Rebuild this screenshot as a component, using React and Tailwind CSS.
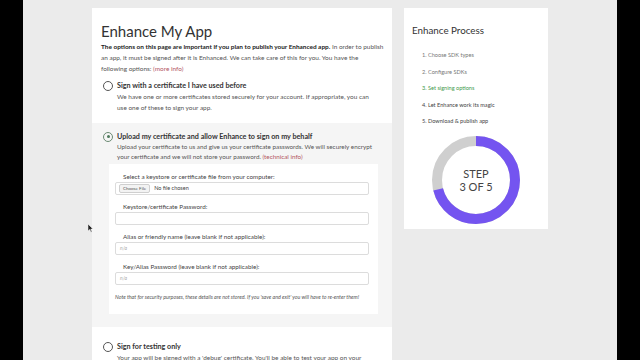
import React from "react";

const font = { fontFamily: "Lato, 'Open Sans', sans-serif" };

const stripColors = [
  "bg-[#dfe3ea]", "bg-[#e8b7c0]", "bg-[#f3f1c8]", "bg-[#fbfbe4]", "bg-[#d9c4e6]",
  "bg-[#f6f0c0]", "bg-[#f1d4d8]", "bg-[#d5e6ef]", "bg-[#c99aa8]", "bg-[#e9efc8]",
  "bg-[#f7f5dc]", "bg-[#e3b9c6]",
];

const Radio = ({ checked }) => (
  <span
    className={
      "mt-[0.5px] flex h-[10px] w-[10px] shrink-0 items-center justify-center rounded-full border " +
      (checked ? "border-[#6b8a73]" : "border-[#555]")
    }
  >
    {checked && <span className="h-[3px] w-[3px] rounded-full bg-[#4f7a5c]" />}
  </span>
);

const Field = ({ label, placeholder }) => (
  <div className="mt-[7px]">
    <div className="pl-[8px] text-[6.3px] leading-[10px] text-[#444]">{label}</div>
    <div className="flex h-[13px] items-center rounded-[2px] border border-[#dcdcdc] bg-white px-[4px] text-[5px] italic text-[#aaa]">
      {placeholder}
    </div>
  </div>
);

const steps = [
  { t: "1. Choose SDK types" },
  { t: "2. Configure SDKs" },
  { t: "3. Set signing options", active: true },
  { t: "4. Let Enhance work its magic", dark: true },
  { t: "5. Download & publish app", dark: true },
];

const Donut = () => {
  const r = 39;
  const c = 2 * Math.PI * r;
  const done = 0.71;
  return (
    <svg width="90" height="90" viewBox="0 0 90 90">
      <circle cx="45" cy="45" r={r} fill="none" stroke="#cfcfcf" strokeWidth="10" />
      <circle
        cx="45"
        cy="45"
        r={r}
        fill="none"
        stroke="#7454f0"
        strokeWidth="10"
        strokeDasharray={`${c * done} ${c}`}
        transform="rotate(-90 45 45)"
      />
    </svg>
  );
};

export default function App() {
  return (
    <div className="flex h-[360px] w-[640px] overflow-hidden bg-black" style={font}>
      <div className="w-[23px] shrink-0 bg-black" />
      <div className="relative flex flex-1 gap-[12px] bg-[#ebebeb] pl-[69px] pt-[8px]">
        {/* main card */}
        <div className="flex w-[300px] shrink-0 flex-col bg-white">
          <div className="flex h-[1px]">
            {stripColors.map((c, i) => (
              <div key={i} className={"flex-1 " + c} />
            ))}
          </div>
          <div className="pl-[9px] pr-[8px] pt-[13px]">
            <h1 className="text-[15px] leading-[20px] text-[#333]">Enhance My App</h1>
            <p className="text-[6.45px] leading-[11px] text-[#555]">
              <span className="font-bold text-[#222]">
                The options on this page are important if you plan to publish your Enhanced app.
              </span>{" "}
              In order to publish an app, it must be signed after it is Enhanced. We can take care of this for you. You
              have the following options: <span className="text-[#b3555f]">(more info)</span>
            </p>
          </div>

          {/* option 1 */}
          <div className="flex gap-[4px] pb-[10px] pl-[11px] pr-[12px] pt-[6px]">
            <Radio />
            <div>
              <div className="text-[7.2px] font-bold leading-[11px] text-[#333]">
                Sign with a certificate I have used before
              </div>
              <div className="text-[6.45px] leading-[11px] text-[#555]">
                We have one or more certificates stored securely for your account. If appropriate, you can use one of
                these to sign your app.
              </div>
            </div>
          </div>

          {/* option 2 */}
          <div className="bg-[#f5f5f5] pb-[13px] pt-[8px]">
            <div className="flex gap-[4px] pl-[11px] pr-[10px]">
              <Radio checked />
              <div>
                <div className="text-[7.2px] font-bold leading-[11px] text-[#333]">
                  Upload my certificate and allow Enhance to sign on my behalf
                </div>
                <div className="text-[6.3px] leading-[10px] text-[#555]">
                  Upload your certificate to us and give us your certificate passwords. We will securely encrypt your
                  certificate and we will not store your password.{" "}
                  <span className="text-[#b3555f]">(technical info)</span>
                </div>
              </div>
            </div>
            <div className="ml-[17px] mr-[14px] mt-[2px] bg-white pb-[13px] pl-[6px] pr-[9px] pt-[8px]">
              <div className="pl-[8px] text-[6.3px] leading-[10px] text-[#444]">
                Select a keystore or certificate file from your computer:
              </div>
              <div className="flex h-[13px] items-center gap-[4px] rounded-[2px] border border-[#dcdcdc] bg-white px-[3px]">
                <span className="rounded-[2px] border border-[#cfcfcf] bg-[#f3f3f3] px-[3px] text-[4.5px] leading-[7px] text-[#555]">
                  Choose File
                </span>
                <span className="text-[5.5px] text-[#444]">No file chosen</span>
              </div>
              <Field label="Keystore/certificate Password:" placeholder="" />
              <Field label="Alias or friendly name (leave blank if not applicable):" placeholder="n/a" />
              <Field label="Key/Alias Password (leave blank if not applicable):" placeholder="n/a" />
              <div className="mt-[9px] whitespace-nowrap text-[5.3px] italic leading-[7px] text-[#555]">
                Note that for security purposes, these details are not stored. If you 'save and exit' you will have to
                re-enter them!
              </div>
            </div>
          </div>

          {/* option 3 */}
          <div className="flex gap-[4px] pl-[11px] pr-[10px] pt-[14px]">
            <Radio />
            <div>
              <div className="text-[7.2px] font-bold leading-[11px] text-[#333]">Sign for testing only</div>
              <div className="text-[6.45px] leading-[11px] text-[#555]">
                Your app will be signed with a 'debug' certificate. You'll be able to test your app on your devices.
              </div>
            </div>
          </div>
        </div>

        {/* sidebar */}
        <div className="flex h-[221px] w-[144px] shrink-0 flex-col bg-white px-[8px]">
          <div className="pt-[14px] text-[9.8px] leading-[16px] text-[#333]">Enhance Process</div>
          <ul className="mt-[9px] pl-[10px]">
            {steps.map((s) => (
              <li
                key={s.t}
                className={
                  "text-[5.6px] leading-[16.6px] " +
                  (s.active ? "text-[#3f9a4d]" : s.dark ? "text-[#444]" : "text-[#777]")
                }
              >
                {s.t}
              </li>
            ))}
          </ul>
          <div className="relative mx-auto mt-[5px] h-[90px] w-[90px]">
            <Donut />
            <div className="absolute inset-0 flex flex-col items-center justify-center text-[11px] leading-[13px] text-[#444]">
              <span>STEP</span>
              <span>3 OF 5</span>
            </div>
          </div>
        </div>

        {/* mouse pointer */}
        <svg className="absolute left-[65px] top-[224px]" width="6" height="9" viewBox="0 0 6 9">
          <path d="M0 0 L0 7 L1.8 5.4 L3 8.2 L4 7.8 L2.8 5 L5 5 Z" fill="#222" stroke="#fff" strokeWidth="0.5" />
        </svg>
      </div>
      <div className="w-[23px] shrink-0 bg-black" />
    </div>
  );
}
